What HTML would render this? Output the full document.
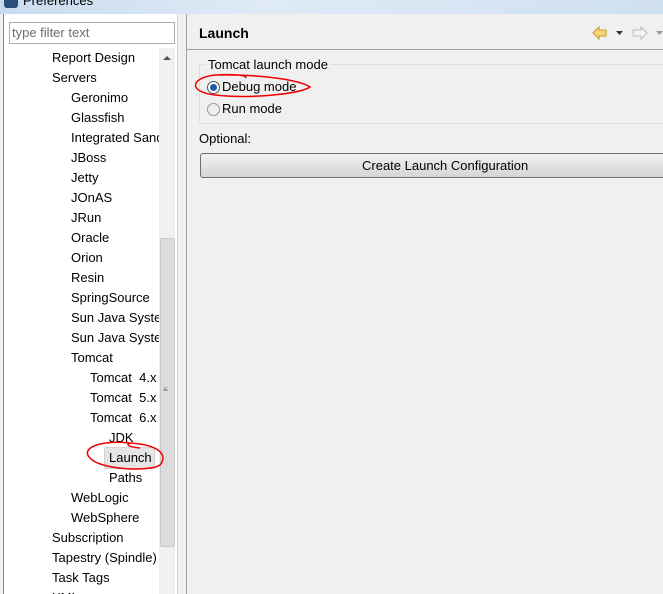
<!DOCTYPE html>
<html><head><style>
body{margin:0;width:663px;height:594px;overflow:hidden;background:#f0f0f0;font-family:"Liberation Sans",sans-serif;font-size:13px;color:#000;position:relative}
.a{position:absolute;white-space:nowrap}
</style></head><body>
<div class="a" style="left:0;top:0;width:663px;height:14px;background:linear-gradient(90deg,#c9dcef,#dfeaf6 40%,#cfe0f1)"></div>
<div class="a" style="left:4px;top:0;width:14px;height:8px;background:#2b4f7a;border-radius:0 0 3px 3px"></div>
<div class="a" style="left:23px;top:-7px;font-size:13px;color:#000">Preferences</div>
<div class="a" style="left:3px;top:14px;width:173px;height:580px;background:#fff;border-left:1px solid #828790;border-right:1px solid #d0d0d0"></div>
<div class="a" style="left:9px;top:22px;width:164px;height:20px;border:1px solid #abadb3;background:#fff"></div>
<div class="a" style="left:12px;top:25px;color:#6d6d6d">type filter text</div>
<div class="a" style="left:159px;top:48px;width:16px;height:546px;background:#f0f0f0"></div>
<div class="a" style="left:163px;top:56px;width:0;height:0;border:4px solid transparent;border-bottom:4px solid #555;border-top:0"></div>
<div class="a" style="left:160px;top:238px;width:13px;height:307px;background:#dcdcdc;border:1px solid #c8c8c8;border-radius:2px"></div>
<div class="a" style="left:163px;top:388px;font-size:8px;color:#666;line-height:3px">≡</div>
<div class="a" style="left:104px;top:447px;width:49px;height:20px;background:#e5e5e5;border:1px solid #d5d5d5;border-radius:2px"></div>
<div class="a" style="left:0;top:48px;width:159px;height:546px;overflow:hidden">
<div style="position:relative;line-height:20px">
<div class="a" style="left:52px;top:0">Report Design</div>
<div class="a" style="left:52px;top:20px">Servers</div>
<div class="a" style="left:71px;top:40px">Geronimo</div>
<div class="a" style="left:71px;top:60px">Glassfish</div>
<div class="a" style="left:71px;top:80px">Integrated Sandbox</div>
<div class="a" style="left:71px;top:100px">JBoss</div>
<div class="a" style="left:71px;top:120px">Jetty</div>
<div class="a" style="left:71px;top:140px">JOnAS</div>
<div class="a" style="left:71px;top:160px">JRun</div>
<div class="a" style="left:71px;top:180px">Oracle</div>
<div class="a" style="left:71px;top:200px">Orion</div>
<div class="a" style="left:71px;top:220px">Resin</div>
<div class="a" style="left:71px;top:240px">SpringSource</div>
<div class="a" style="left:71px;top:260px">Sun Java System</div>
<div class="a" style="left:71px;top:280px">Sun Java System</div>
<div class="a" style="left:71px;top:300px">Tomcat</div>
<div class="a" style="left:90px;top:320px">Tomcat &nbsp;4.x</div>
<div class="a" style="left:90px;top:340px">Tomcat &nbsp;5.x</div>
<div class="a" style="left:90px;top:360px">Tomcat &nbsp;6.x</div>
<div class="a" style="left:109px;top:380px">JDK</div>
<div class="a" style="left:109px;top:400px">Launch</div>
<div class="a" style="left:109px;top:420px">Paths</div>
<div class="a" style="left:71px;top:440px">WebLogic</div>
<div class="a" style="left:71px;top:460px">WebSphere</div>
<div class="a" style="left:52px;top:480px">Subscription</div>
<div class="a" style="left:52px;top:500px">Tapestry (Spindle)</div>
<div class="a" style="left:52px;top:520px">Task Tags</div>
<div class="a" style="left:52px;top:540px">XML</div>
</div></div>
<div class="a" style="left:186px;top:14px;width:477px;height:580px;background:#f0f0f0;border-left:1px solid #a0a0a0"></div>
<div class="a" style="left:186px;top:49px;width:477px;height:1px;background:#a0a0a0"></div>
<div class="a" style="left:199px;top:25px;font-weight:bold;font-size:14px">Launch</div>
<svg class="a" style="left:590px;top:24px" width="73" height="18"><path d="M3 9 L9 3 V6 H16 V12 H9 V15 Z" fill="#f7d57a" stroke="#c99a2e"/><path d="M26 7 h7 l-3.5 4z" fill="#333"/><path d="M57 9 L51 3 V6 H43 V12 H51 V15 Z" fill="#f3f3f3" stroke="#bbb"/><path d="M66 7 h7 l-3.5 4z" fill="#999"/></svg>
<div class="a" style="left:199px;top:64px;width:470px;height:58px;border:1px solid #d5dfe5;border-radius:3px"></div>
<div class="a" style="left:206px;top:57px;background:#f0f0f0;padding:0 2px">Tomcat launch mode</div>
<div class="a" style="left:207px;top:81px;width:11px;height:11px;border-radius:50%;border:1px solid #555;background:#fff"></div>
<div class="a" style="left:210px;top:84px;width:7px;height:7px;border-radius:50%;background:#1e5aa8"></div>
<div class="a" style="left:222px;top:79px">Debug mode</div>
<div class="a" style="left:207px;top:103px;width:11px;height:11px;border-radius:50%;border:1px solid #999;background:#eee"></div>
<div class="a" style="left:222px;top:101px">Run mode</div>
<div class="a" style="left:199px;top:131px">Optional:</div>
<div class="a" style="left:200px;top:153px;width:470px;height:23px;border:1px solid #707070;border-radius:3px;background:linear-gradient(#f2f2f2,#e3e3e3 50%,#d5d5d5)"></div>
<div class="a" style="left:362px;top:158px">Create Launch Configuration</div>
<svg class="a" style="left:0;top:0" width="663" height="594"><g fill="none" stroke="#e00" stroke-width="1.5"><path d="M215 75 C190 78 188 92 215 95 C250 99 300 94 310 87 C300 80 260 74 215 75 C230 74 250 75 245 78"/><path d="M130 443 C100 440 80 448 90 458 C100 470 150 472 160 465 C168 455 160 445 130 443 C125 445 130 447 140 448"/></g></svg>
</body></html>
